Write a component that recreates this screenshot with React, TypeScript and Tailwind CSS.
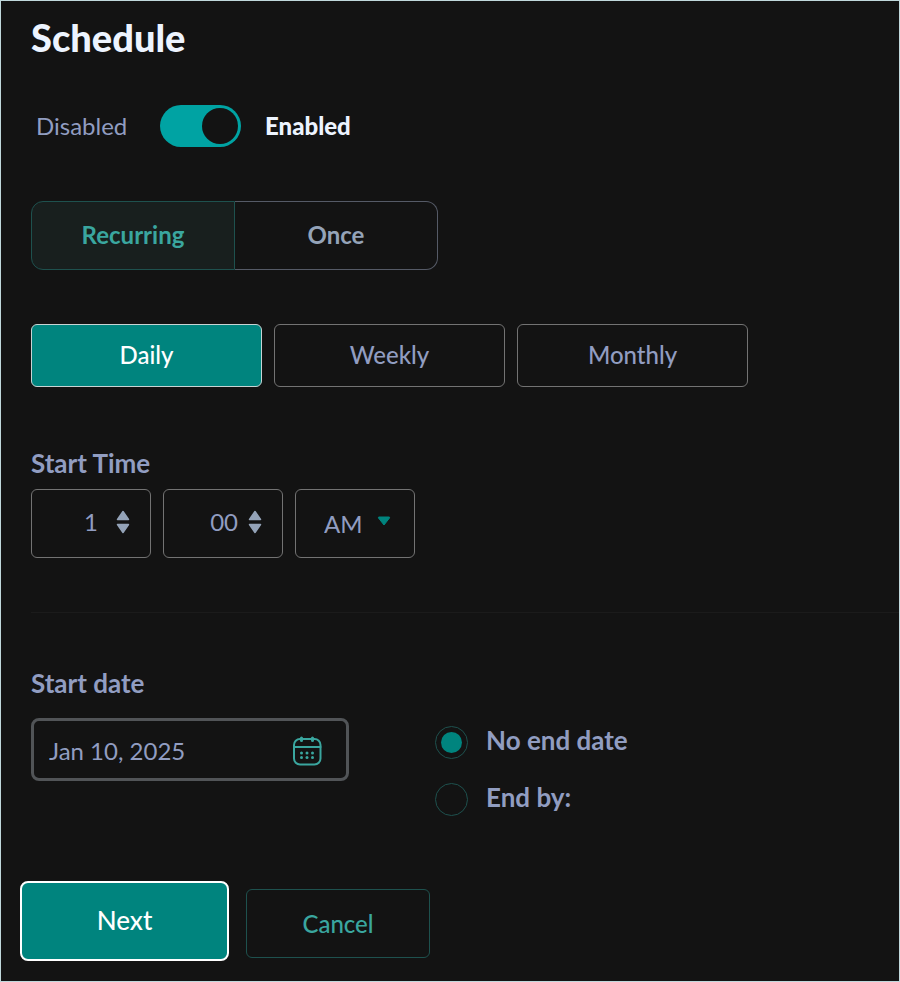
import { useState } from 'react';

const frequencies = ['Daily', 'Weekly', 'Monthly'];

function Stepper({ label, onStep }: { label: string; onStep: (delta: number) => void }) {
  return (
    <div className="flex flex-col gap-[2px]">
      <button type="button" aria-label={`Increase ${label}`} onClick={() => onStep(1)}>
        <svg width="14" height="11" viewBox="0 0 14 11" className="block">
          <path d="M7 1.500 L12.500 9.500 H1.500 Z" fill="#94a3b8" stroke="#94a3b8" strokeWidth="1.500" strokeLinejoin="round" />
        </svg>
      </button>
      <button type="button" aria-label={`Decrease ${label}`} onClick={() => onStep(-1)}>
        <svg width="14" height="11" viewBox="0 0 14 11" className="block">
          <path d="M7 9.500 L12.500 1.500 H1.500 Z" fill="#94a3b8" stroke="#94a3b8" strokeWidth="1.500" strokeLinejoin="round" />
        </svg>
      </button>
    </div>
  );
}

function CalendarIcon() {
  return (
    <svg width="30" height="30" viewBox="0 0 30 30" fill="none" stroke="#3aa69f" strokeWidth="2" strokeLinecap="round">
      <rect x="2" y="3" width="26.500" height="25.500" rx="6" />
      <path d="M2 11H28.500" />
      <path d="M9.500 2V4.500M20.500 2V4.500" strokeWidth="3" />
      <g fill="#3aa69f" stroke="none">
        <circle cx="9.500" cy="17" r="1.500" />
        <circle cx="15" cy="17" r="1.500" />
        <circle cx="20.500" cy="17" r="1.500" />
        <circle cx="9.500" cy="21.500" r="1.500" />
        <circle cx="15" cy="21.500" r="1.500" />
        <circle cx="20.500" cy="21.500" r="1.500" />
      </g>
    </svg>
  );
}

export default function App() {
  const [enabled, setEnabled] = useState(true);
  const [mode, setMode] = useState('recurring');
  const [frequency, setFrequency] = useState('Daily');
  const [hour, setHour] = useState(1);
  const [minute, setMinute] = useState(0);
  const [period, setPeriod] = useState('AM');
  const [startDate, setStartDate] = useState('Jan 10, 2025');
  const [endType, setEndType] = useState('none');

  const stepHour = (delta: number) => setHour((h) => ((h - 1 + delta + 12) % 12) + 1);
  const stepMinute = (delta: number) => setMinute((m) => (m + delta + 60) % 60);

  return (
    <form
      onSubmit={(e) => e.preventDefault()}
      className="min-h-screen border border-[#c0d8dc] bg-[#131313] pt-4 pb-5 pl-[30px] font-['Lato','Noto_Sans',sans-serif] text-2xl text-[#919dc1]"
    >
      <h1 className="text-[38px] leading-10 font-black text-[#edf4ff]">Schedule</h1>

      {/* Enabled switch */}
      <div className="mt-12 flex items-center pl-[5px]">
        <span className="w-[124px]">Disabled</span>
        <input
          id="enabled"
          type="checkbox"
          role="switch"
          checked={enabled}
          onChange={(e) => setEnabled(e.target.checked)}
          className="flex h-[42px] w-[81px] appearance-none rounded-full bg-[#475569] p-[3px] before:block before:size-9 before:rounded-full before:bg-[#131313] checked:justify-end checked:bg-[#00a3a3]"
        />
        <label htmlFor="enabled" className="ml-6 font-black text-[#edf4ff]">
          Enabled
        </label>
      </div>

      {/* Recurring / Once */}
      <div className="mt-[54px] flex h-[69px] w-[407px] max-w-full font-bold">
        <button
          type="button"
          aria-pressed={mode === 'recurring'}
          onClick={() => setMode('recurring')}
          className={`flex-1 rounded-l-xl border pb-[2px] ${
            mode === 'recurring' ? 'border-[#1e514e] bg-[#181f1e] text-[#3aa69f]' : 'border-[#555a66] text-[#94a3b8]'
          }`}
        >
          Recurring
        </button>
        <button
          type="button"
          aria-pressed={mode === 'once'}
          onClick={() => setMode('once')}
          className={`flex-1 rounded-r-xl border border-l-0 pb-[2px] ${
            mode === 'once' ? 'border-[#1e514e] bg-[#181f1e] text-[#3aa69f]' : 'border-[#555a66] text-[#94a3b8]'
          }`}
        >
          Once
        </button>
      </div>

      {/* Frequency */}
      <div className="mt-[54px] flex gap-3">
        {frequencies.map((f) => (
          <button
            key={f}
            type="button"
            aria-pressed={frequency === f}
            onClick={() => setFrequency(f)}
            className={`h-[63px] w-[231px] rounded-md border pb-[2px] font-medium ${
              frequency === f ? 'border-[#c8d4d4] bg-[#00847e] text-white' : 'border-[#737373]'
            }`}
          >
            {f}
          </button>
        ))}
      </div>

      {/* Start time */}
      <fieldset className="mt-[60px]">
        <legend className="text-[26px] leading-8 font-bold">Start Time</legend>
        <div className="mt-[10px] flex gap-3">
          <div className="flex h-[69px] w-[120px] items-center gap-[18px] rounded-md border border-[#737373] pr-5 pb-[3px] pl-3">
            <input
              aria-label="Hour"
              value={hour}
              onChange={(e) => setHour(Number(e.target.value) || 1)}
              className="w-full min-w-0 bg-transparent text-right outline-none"
            />
            <Stepper label="hour" onStep={stepHour} />
          </div>
          <div className="flex h-[69px] w-[120px] items-center gap-[10px] rounded-md border border-[#737373] pr-5 pb-[3px] pl-3">
            <input
              aria-label="Minute"
              value={String(minute).padStart(2, '0')}
              onChange={(e) => setMinute(Number(e.target.value) % 60 || 0)}
              className="w-full min-w-0 bg-transparent text-right outline-none"
            />
            <Stepper label="minute" onStep={stepMinute} />
          </div>
          <div className="relative h-[69px] w-[120px] rounded-md border border-[#737373]">
            <select
              aria-label="AM or PM"
              value={period}
              onChange={(e) => setPeriod(e.target.value)}
              className="size-full appearance-none bg-transparent pl-7 outline-none"
            >
              <option>AM</option>
              <option>PM</option>
            </select>
            <svg width="14" height="10" viewBox="0 0 14 10" className="pointer-events-none absolute top-[26px] right-[23px]">
              <path d="M7 9 L12.500 2 Q13 1 12 1 H2 Q1 1 1.500 2 Z" fill="#00847e" stroke="#00847e" strokeLinejoin="round" />
            </svg>
          </div>
        </div>
      </fieldset>

      <hr className="mt-[54px] border-[#1b1b1b]" />

      {/* Start and end date */}
      <div className="mt-[54px] text-[26px] leading-8">
        <label htmlFor="start-date" className="font-bold">
          Start date
        </label>
      </div>
      <div className="mt-[19px] flex items-start gap-[86px]">
        <div className="flex h-[63px] w-[318px] items-center rounded-lg border-3 border-[#515457] pt-[2px] pr-6 pl-[15px]">
          <input
            id="start-date"
            value={startDate}
            onChange={(e) => setStartDate(e.target.value)}
            className="min-w-0 flex-1 bg-transparent outline-none"
          />
          <button type="button" aria-label="Open calendar">
            <CalendarIcon />
          </button>
        </div>
        <div className="flex flex-col gap-6 pt-2 text-[26px] leading-7 font-bold">
          <label className="flex gap-[18px]">
            <input
              type="radio"
              name="end"
              checked={endType === 'none'}
              onChange={() => setEndType('none')}
              className="grid size-[33px] appearance-none place-items-center rounded-full border border-[#1e514e] before:size-[21px] before:rounded-full checked:before:bg-[#00847e]"
            />
            No end date
          </label>
          <label className="flex gap-[18px]">
            <input
              type="radio"
              name="end"
              checked={endType === 'by'}
              onChange={() => setEndType('by')}
              className="grid size-[33px] appearance-none place-items-center rounded-full border border-[#1e514e] before:size-[21px] before:rounded-full checked:before:bg-[#00847e]"
            />
            End by:
          </label>
        </div>
      </div>

      <div className="mt-[65px] -ml-[11px] flex items-end gap-[17px]">
        <button
          type="submit"
          className="h-20 w-[209px] rounded-lg border-2 border-white bg-[#00847e] pb-[2px] text-[26px] font-medium text-white"
        >
          Next
        </button>
        <button
          type="button"
          className="mb-[3px] h-[69px] w-[184px] rounded-md border border-[#1e514e] font-medium text-[#3aa69f]"
        >
          Cancel
        </button>
      </div>
    </form>
  );
}
